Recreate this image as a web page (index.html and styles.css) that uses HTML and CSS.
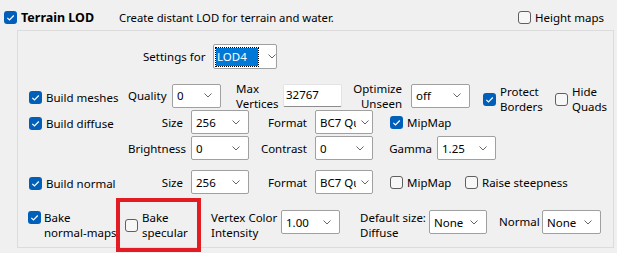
FILE: index.html
```html
<!DOCTYPE html>
<html>
<head>
    <link rel="stylesheet" href="styles.css">
</head>
<body>
    <div class="head">
        <label class="chk title"><span class="box on"><svg viewBox="0 0 13 13"><path d="M3.3 6.8l2.2 2.2 4.3-4.5"/></svg></span>Terrain LOD</label>
        <span class="desc">Create distant LOD for terrain and water.</span>
        <label class="chk height"><span class="box"></span>Height maps</label>
    </div>
    <div class="panel">
        <div class="settings">
            <span class="lbl">Settings for</span>
            <div class="select lod"><span class="sel-text">LOD4</span><svg class="arrow" viewBox="0 0 8 5"><path d="M0.5 0.5l3.5 3.5 3.5-3.5"/></svg></div>
        </div>

        <div class="row row-mesh">
            <label class="chk main"><span class="box on"><svg viewBox="0 0 13 13"><path d="M3.3 6.8l2.2 2.2 4.3-4.5"/></svg></span>Build meshes</label>
            <span class="lbl">Quality</span>
            <div class="select"><span>0</span><svg class="arrow" viewBox="0 0 8 5"><path d="M0.5 0.5l3.5 3.5 3.5-3.5"/></svg></div>
            <span class="lbl two pl15">Max<br>Vertices</span>
            <div class="input">32767</div>
            <span class="lbl two right pr9">Optimize<br>Unseen</span>
            <div class="select"><span>off</span><svg class="arrow" viewBox="0 0 8 5"><path d="M0.5 0.5l3.5 3.5 3.5-3.5"/></svg></div>
            <label class="chk low pl13"><span class="box on"><svg viewBox="0 0 13 13"><path d="M3.3 6.8l2.2 2.2 4.3-4.5"/></svg></span><span class="two">Protect<br>Borders</span></label>
            <label class="chk low"><span class="box"></span><span class="two">Hide<br>Quads</span></label>
        </div>

        <div class="row row-diffuse">
            <label class="chk main"><span class="box on"><svg viewBox="0 0 13 13"><path d="M3.3 6.8l2.2 2.2 4.3-4.5"/></svg></span>Build diffuse</label>
            <span class="lbl right pr8">Size</span>
            <div class="select"><span>256</span><svg class="arrow" viewBox="0 0 8 5"><path d="M0.5 0.5l3.5 3.5 3.5-3.5"/></svg></div>
            <span class="lbl right pr8">Format</span>
            <div class="select"><span class="clip">BC7 Qu</span><svg class="arrow" viewBox="0 0 8 5"><path d="M0.5 0.5l3.5 3.5 3.5-3.5"/></svg></div>
            <label class="chk pl17"><span class="box on"><svg viewBox="0 0 13 13"><path d="M3.3 6.8l2.2 2.2 4.3-4.5"/></svg></span>MipMap</label>
        </div>

        <div class="row row-bright">
            <span></span>
            <span class="lbl right pr8">Brightness</span>
            <div class="select"><span>0</span><svg class="arrow" viewBox="0 0 8 5"><path d="M0.5 0.5l3.5 3.5 3.5-3.5"/></svg></div>
            <span class="lbl right pr8">Contrast</span>
            <div class="select"><span>0</span><svg class="arrow" viewBox="0 0 8 5"><path d="M0.5 0.5l3.5 3.5 3.5-3.5"/></svg></div>
            <span class="lbl right pr5">Gamma</span>
            <div class="select"><span>1.25</span><svg class="arrow" viewBox="0 0 8 5"><path d="M0.5 0.5l3.5 3.5 3.5-3.5"/></svg></div>
        </div>

        <div class="row row-normal">
            <label class="chk main"><span class="box on"><svg viewBox="0 0 13 13"><path d="M3.3 6.8l2.2 2.2 4.3-4.5"/></svg></span>Build normal</label>
            <span class="lbl right pr8">Size</span>
            <div class="select"><span>256</span><svg class="arrow" viewBox="0 0 8 5"><path d="M0.5 0.5l3.5 3.5 3.5-3.5"/></svg></div>
            <span class="lbl right pr8">Format</span>
            <div class="select"><span class="clip">BC7 Qu</span><svg class="arrow" viewBox="0 0 8 5"><path d="M0.5 0.5l3.5 3.5 3.5-3.5"/></svg></div>
            <label class="chk pl17"><span class="box"></span>MipMap</label>
            <label class="chk"><span class="box"></span>Raise steepness</label>
        </div>

        <div class="row row-bake">
            <label class="chk top"><span class="box on"><svg viewBox="0 0 13 13"><path d="M3.3 6.8l2.2 2.2 4.3-4.5"/></svg></span><span class="two">Bake<br>normal-maps</span></label>
            <label class="chk spec"><span class="box"></span><span class="two">Bake<br>specular</span></label>
            <span class="lbl two pl10">Vertex Color<br>Intensity</span>
            <div class="select"><span>1.00</span><svg class="arrow" viewBox="0 0 8 5"><path d="M0.5 0.5l3.5 3.5 3.5-3.5"/></svg></div>
            <span class="lbl two pl20">Default size:<br>Diffuse</span>
            <div class="select"><span>None</span><svg class="arrow" viewBox="0 0 8 5"><path d="M0.5 0.5l3.5 3.5 3.5-3.5"/></svg></div>
            <span class="lbl pl12 mid">Normal</span>
            <div class="select"><span>None</span><svg class="arrow" viewBox="0 0 8 5"><path d="M0.5 0.5l3.5 3.5 3.5-3.5"/></svg></div>
        </div>
    </div>
</body>
</html>
```
FILE: styles.css
```css
body {
    margin: 0;
    background-color: #f0f0f0;
    font-family: "Noto Sans", sans-serif;
    font-size: 11.5px;
    color: #000;
    width: 617px;
    height: 253px;
    overflow: hidden;
}
.head {
    height: 30px;
    box-sizing: border-box;
    padding: 5px 13px 0 4px;
    display: flex;
    align-items: center;
}
.chk {
    display: flex;
    align-items: center;
    gap: 4px;
    white-space: nowrap;
}
.title {
    width: 115px;
    font-weight: bold;
    font-size: 12.5px;
}
.desc {
    font-size: 11.3px;
}
.height {
    margin-left: auto;
}
.box {
    width: 13px;
    height: 13px;
    flex: none;
    box-sizing: border-box;
    border: 1px solid #5f5f5f;
    border-radius: 3px;
    background-color: #f7f7f7;
    display: flex;
}
.box.on {
    border: none;
    background-color: #005fb8;
}
.box svg {
    width: 13px;
    height: 13px;
}
.box path {
    fill: none;
    stroke: #fff;
    stroke-width: 1.2;
}
.panel {
    margin-left: 17px;
    width: 597px;
    height: 218px;
    box-sizing: border-box;
    border: 1px solid #dcdcdc;
    padding-left: 11px;
}
.settings {
    margin-top: 13px;
    height: 25px;
    padding-left: 114px;
    display: flex;
    align-items: center;
}
.settings .lbl {
    width: 70px;
}
.select {
    height: 24px;
    box-sizing: border-box;
    background-color: #fff;
    border: 1px solid #a0a0a0;
    border-radius: 2px;
    display: flex;
    align-items: center;
    padding: 0 8px 0 4px;
    overflow: hidden;
}
.select span {
    flex: 1;
    white-space: nowrap;
    overflow: hidden;
}
.select .clip {
    flex: none;
    width: 36px;
    margin-right: 5px;
}
.arrow {
    width: 8px;
    height: 5px;
    flex: none;
}
.arrow path {
    fill: none;
    stroke: #666;
    stroke-width: 1;
}
.select.lod {
    width: 64px;
    height: 25px;
    padding: 0 8px 0 2px;
}
.select .sel-text {
    flex: none;
    width: 42px;
    height: 18px;
    line-height: 18px;
    padding-left: 1px;
    box-sizing: border-box;
    background-color: #0078d7;
    color: #fff;
    outline: 1px dotted #000;
    margin-right: 10px;
}
.input {
    height: 23px;
    box-sizing: border-box;
    background-color: #fff;
    border: 1px solid #e3e3e3;
    border-bottom-color: #8c8c8c;
    border-radius: 2px;
    padding-left: 2px;
    line-height: 20px;
}
.row {
    display: grid;
    align-items: center;
    height: 24px;
}
.row-mesh {
    margin-top: 8px;
    grid-template-columns: 99px 44px 49px 62px 59px 69px 59px 85px 1fr;
}
.row-diffuse {
    margin-top: 9px;
    grid-template-columns: 99px 63px 58px 66px 58px 1fr;
}
.row-bright {
    margin-top: 2px;
    grid-template-columns: 99px 63px 58px 66px 58px 64px 59px;
}
.row-normal {
    margin-top: 10px;
    grid-template-columns: 99px 63px 58px 66px 58px 92px 1fr;
}
.row-bake {
    margin-top: 16px;
    margin-left: -1px;
    align-items: start;
    grid-template-columns: 88px 85px 80px 59px 89px 58px 55px 59px;
}
.lbl {
    white-space: nowrap;
}
.two {
    line-height: 15px;
}
.right {
    text-align: right;
}
.mid {
    line-height: 24px;
}
.main {
    margin-top: 3px;
}
.low {
    margin-top: 7px;
}
.top {
    align-items: flex-start;
    gap: 3px;
}
.top .box {
    margin-top: 1px;
}
.spec {
    position: relative;
    height: 30px;
    padding-left: 9px;
    align-items: center;
    margin-top: 0;
}
.spec::after {
    content: "";
    position: absolute;
    left: 0;
    top: -12px;
    width: 85px;
    height: 54px;
    box-sizing: border-box;
    border: 4px solid #e31b23;
}
.pl10 { padding-left: 10px; }
.pl12 { padding-left: 12px; }
.pl13 { padding-left: 13px; }
.pl15 { padding-left: 15px; }
.pl17 { padding-left: 17px; }
.pl20 { padding-left: 20px; }
.pr5 { padding-right: 5px; }
.pr8 { padding-right: 8px; }
.pr9 { padding-right: 9px; }
```
